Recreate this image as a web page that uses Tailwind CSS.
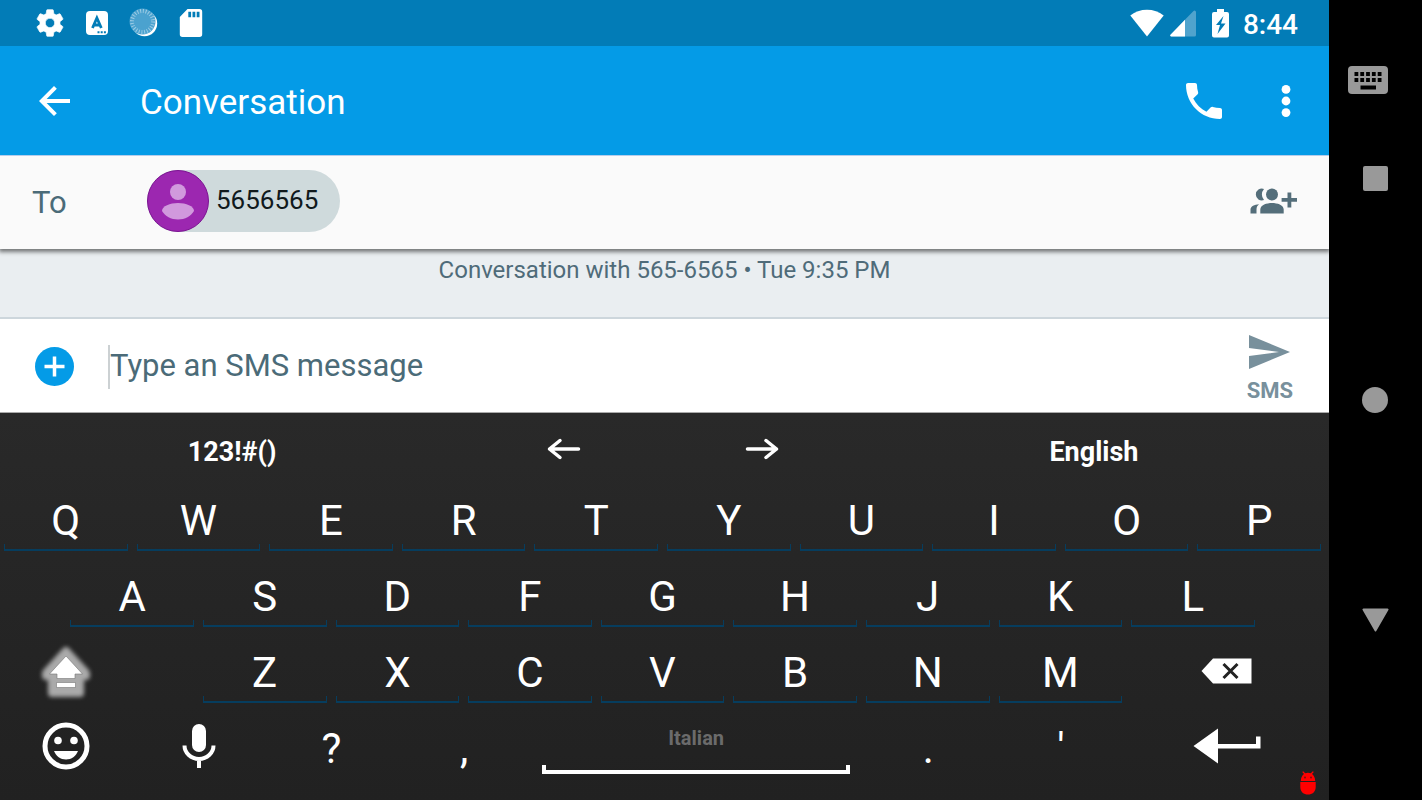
<!DOCTYPE html>
<html lang="en">
<head>
<meta charset="utf-8">
<meta name="viewport" content="width=device-width, initial-scale=1">
<title>Conversation</title>
<script src="https://cdn.jsdelivr.net/npm/@tailwindcss/browser@4"></script>
</head>
<body class="flex min-h-screen bg-black font-['Roboto',sans-serif]">
<div class="relative flex min-w-0 flex-1 flex-col">
  <!-- Status bar -->
  <div class="flex h-[46px] items-center bg-[#027cb7] pr-[31px] pl-[34px] text-white">
    <svg class="size-8" viewBox="0 0 24 24" fill="currentColor" stroke="currentColor" stroke-width=".5" role="img" aria-label="Settings"><path d="M19.43 12.98c.04-.32.07-.64.07-.98s-.03-.66-.07-.98l2.11-1.65c.19-.15.24-.42.12-.64l-2-3.46c-.12-.22-.39-.3-.61-.22l-2.49 1c-.52-.4-1.08-.73-1.69-.98l-.38-2.65C14.46 2.18 14.25 2 14 2h-4c-.25 0-.46.18-.49.42l-.38 2.65c-.61.25-1.17.59-1.69.98l-2.49-1c-.23-.09-.49 0-.61.22l-2 3.46c-.13.22-.07.49.12.64l2.11 1.65c-.04.32-.07.65-.07.98s.03.66.07.98l-2.11 1.65c-.19.15-.24.42-.12.64l2 3.46c.12.22.39.3.61.22l2.49-1c.52.4 1.08.73 1.69.98l.38 2.65c.03.24.24.42.49.42h4c.25 0 .46-.18.49-.42l.38-2.65c.61-.25 1.17-.59 1.69-.98l2.49 1c.23.09.49 0 .61-.22l2-3.46c.12-.22.07-.49-.12-.64l-2.11-1.65zM12 15.5c-1.93 0-3.5-1.57-3.5-3.5s1.57-3.5 3.5-3.5 3.5 1.57 3.5 3.5-1.57 3.5-3.5 3.5z"/></svg>
    <span class="ml-5 h-6 w-[22px] rounded-sm bg-white text-[#027cb7]">
      <svg viewBox="0 0 22 24" class="h-6 w-[22px]" fill="none" stroke="currentColor" role="img" aria-label="Keyboard language"><path d="M6.500 17 10.900 7l4.400 10M8 14h6" stroke-width="2.800"/><path d="M11.500 21.200h9" stroke-width="2" stroke-dasharray="2 1.200"/></svg>
    </span>
    <svg class="ml-5 size-8" viewBox="0 0 32 32" role="img" aria-label="Sync"><circle cx="16.500" cy="16.500" r="12.700" fill="#fff"/><circle cx="14.500" cy="14.500" r="13" fill="#4ba2cf"/><circle cx="14.500" cy="14.500" r="10.500" fill="none" stroke="#9bcbe4" stroke-width="4" stroke-dasharray="1 1.750"/></svg>
    <svg class="ml-[15px] size-8" viewBox="0 0 32 32" fill="currentColor" role="img" aria-label="SD card"><path fill-rule="evenodd" d="M12.500 2H24.500a2.700 2.700 0 0 1 2.700 2.700v22.600a2.700 2.700 0 0 1-2.700 2.700h-17a2.700 2.700 0 0 1-2.700-2.700V10zM13.300 4.800v5.400h2.800V4.800zm4.200 0v5.400h2.800V4.800zm4.200 0v5.400h2.800V4.800z"/></svg>
    <span class="flex-1"></span>
    <svg class="h-7 w-[34px]" viewBox="0 0 34 28" fill="currentColor" role="img" aria-label="Wi-Fi"><path d="M17 27.500.3 6.400C5 2.700 10.800.8 17 .8s12 1.900 16.700 5.600z"/></svg>
    <svg class="ml-[5px] size-7" viewBox="0 0 28 28" role="img" aria-label="Signal"><path d="M27 3a1.500 1.500 0 0 0-2.500-1L1 26l1 1.500h23.500a1.500 1.500 0 0 0 1.500-1.500z" fill="#4fa3cd"/><path d="M16 10.800v16.700H2.200A1 1 0 0 1 1.300 26z" fill="#fff"/></svg>
    <svg class="ml-3 h-[30px] w-[22px]" viewBox="0 0 22 30" fill="currentColor" role="img" aria-label="Charging"><path fill-rule="evenodd" d="M8 1h7v3h3a2 2 0 0 1 2 2v21.500a2 2 0 0 1-2 2H5a2 2 0 0 1-2-2V6a2 2 0 0 1 2-2h3zM14.500 8 7 17h4l-2.500 9 8-10.500H12z"/></svg>
    <span class="ml-3 pt-1 text-[28px] leading-8 font-medium">8:44</span>
  </div>
  <!-- App bar -->
  <header class="flex h-[109px] items-center bg-[#049be7] pr-[19px] pl-[31px] text-white">
    <button aria-label="Back" class="size-12"><svg class="size-12" viewBox="0 0 24 24" fill="currentColor"><path d="M19.500 11H7.830l5.090-5.090L11.500 4.500 4 12l7.500 7.500 1.410-1.410L7.830 13H19.500z"/></svg></button>
    <h1 class="ml-[61px] flex-1 pt-1 text-[35px] leading-10">Conversation</h1>
    <button aria-label="Call" class="size-12"><svg class="size-12" viewBox="0 0 24 24" fill="currentColor"><path d="M6.620 10.790c1.440 2.830 3.760 5.140 6.590 6.590l2.200-2.200c.27-.27.67-.36 1.020-.24 1.120.37 2.330.57 3.570.57.55 0 1 .45 1 1V20c0 .55-.45 1-1 1-9.390 0-17-7.610-17-17 0-.55.45-1 1-1h3.500c.55 0 1 .45 1 1 0 1.250.2 2.450.57 3.570.11.35.03.74-.25 1.020z"/></svg></button>
    <button aria-label="More options" class="ml-[34px] size-12"><svg class="size-12" viewBox="0 0 24 24" fill="currentColor"><circle cx="12" cy="6.200" r="2.200"/><circle cx="12" cy="12" r="2.200"/><circle cx="12" cy="17.800" r="2.200"/></svg></button>
  </header>
  <!-- Recipients -->
  <section class="z-10 flex h-[94px] items-center border-t border-[#b5cdec] bg-[#fafafa] pr-8 pl-8 shadow-[0_2px_4px_1px_rgba(0,0,0,0.5)] [clip-path:inset(0_0_-8px_0)]">
    <span class="w-[115px] text-[31px] leading-10 text-[#4b6b78]">To</span>
    <button class="mb-1 flex h-[62px] items-center rounded-full bg-[#cfdadc] pr-[22px] text-[26px] text-[#10191c]">
      <svg class="mr-[7px] size-[62px]" viewBox="0 0 62 62"><circle cx="31" cy="31" r="30.500" fill="#9c27b0" stroke="#7c1392"/><circle cx="31" cy="22" r="8" fill="#d199dd"/><path d="M15 41c0-5 8-8 16-8s16 3 16 8c-3 5-9 8.500-16 8.500S18 46 15 41z" fill="#d199dd"/></svg>5656565</button>
    <span class="flex-1"></span>
    <button aria-label="Add people" class="mb-1"><svg class="h-[26px] w-[47px]" viewBox="0 0 47 26" fill="#546e7a"><circle cx="22" cy="6.500" r="6"/><path d="M10.300 25.500v-4c0-4.500 6.500-6.500 11.700-6.500s11.700 2 11.700 6.500v4zM14 .9a8.500 8.500 0 0 0 0 11.200A6 6 0 1 1 14 .9zM9 16.300c-1.800 1.500-2.500 3-2.500 5.200v4H.5v-4c0-3 4-4.900 8.500-5.200zM37.500 4.500h3.800V10h5.700v3.800h-5.700v5.700h-3.800v-5.700h-5.900V10h5.900z"/></svg></button>
  </section>
  <!-- Thread -->
  <main class="h-[70px] border-b-2 border-[#cdd6dc] bg-[#eaeef1] pt-[5px] text-center text-[24px] leading-8 text-[#4f6b79]">Conversation with 565-6565 • Tue 9:35 PM</main>
  <!-- Composer -->
  <form class="flex h-[94px] items-center border-b border-[#aaa] bg-white pt-0.5 pr-9 pl-[35px]">
    <button type="button" aria-label="Attach"><svg class="size-[39px]" viewBox="0 0 39 39"><circle cx="19.500" cy="19.500" r="19.500" fill="#049be7"/><path d="M19.500 9.500v20M9.500 19.500h20" stroke="#fff" stroke-width="3.500"/></svg></button>
    <input type="text" aria-label="Message" placeholder="Type an SMS message" class="ml-[34px] h-11 min-w-0 flex-1 border-l-2 border-[#ccd1d3] text-[31px] text-[#4b6b78] outline-none placeholder:text-[#4b6b78]">
    <button type="button" class="flex flex-col items-center gap-2.5 pt-1 text-[22px] leading-6 font-bold text-[#78909c]"><svg class="h-[34px] w-[41px]" viewBox="0 0 41 34" fill="currentColor"><path d="M0 0 41 17 0 34V21l30-4L0 13z"/></svg>SMS</button>
  </form>
  <!-- Keyboard -->
  <section aria-label="Keyboard" class="grid flex-1 auto-rows-[76px] grid-cols-20 grid-rows-[66px] content-start bg-linear-to-b from-[#292929] to-[#212121] pr-[3px] text-[42px] leading-[54px] text-white [&>button]:min-w-0">
    <div class="col-span-20 grid h-[66px] grid-cols-20 text-[27px] font-bold">
      <button class="col-span-7 pt-[11px]">123!#()</button>
      <button aria-label="Cursor left" class="col-span-3 flex items-center justify-center pt-1.5"><svg class="h-6 w-[34px]" viewBox="0 0 34 24" fill="none" stroke="currentColor" stroke-width="3.500" stroke-linecap="round" stroke-linejoin="round"><path d="M31.500 12H2.500M13 3.500 2.500 12 13 20.500"/></svg></button>
      <button aria-label="Cursor right" class="col-span-3 flex items-center justify-center pt-1.5"><svg class="h-6 w-[34px]" viewBox="0 0 34 24" fill="none" stroke="currentColor" stroke-width="3.500" stroke-linecap="round" stroke-linejoin="round"><path d="M2.500 12h29M21 3.500 31.500 12 21 20.500"/></svg></button>
      <button class="col-span-7 pt-[11px]">English</button>
    </div>
  </section>
  <svg class="absolute right-[13px] bottom-[5px] h-6 w-4" viewBox="0 0 16 24" fill="#f00" aria-hidden="true"><path d="M.8 10C.8 6 3 3.800 4 3L2.200.9l1-.7L5.200 2.200a8 8 0 0 1 5.600 0L12.800.2l1 .7L12 3c1 .8 3.200 3 3.200 7zM.3 11h15.400v5c0 5-3.500 7.500-7.700 7.500S.3 21 .3 16z"/><circle cx="5" cy="6.500" r=".9" fill="#611"/><circle cx="11" cy="6.500" r=".9" fill="#611"/></svg>
</div>
<!-- Device buttons -->
<nav class="flex w-[93px] flex-col items-center text-[#999]">
  <button aria-label="Toggle keyboard" class="mt-[66px] mr-4"><svg class="block h-7 w-10" viewBox="0 0 40 28"><rect width="40" height="28" rx="4" fill="currentColor"/><path d="M6.500 8h28M6.500 14h28" stroke="#000" stroke-width="3.800" stroke-dasharray="3.800 2"/><path d="M12.500 21.500h15.500" stroke="#000" stroke-width="4"/></svg></button>
  <button aria-label="Overview" class="mt-[72px] size-[25px] rounded-xs bg-current"></button>
  <button aria-label="Home" class="mt-[196px] mr-px size-[26px] rounded-full bg-current"></button>
  <button aria-label="Back" class="mt-[195px]"><svg class="block h-6 w-[27px]" viewBox="0 0 27 24" fill="currentColor"><path d="M1.500.5h24a1 1 0 0 1 .9 1.500L14.300 23a1 1 0 0 1-1.600 0L.6 2A1 1 0 0 1 1.500.5z"/></svg></button>
</nav>
<template id="key"><button class="col-span-2 flex flex-col pt-[15px] pr-[5px] pl-1"><span class="w-full text-center"></span><i class="-mt-1 h-[7px] w-full border-x border-b-2 border-[#063d5e]"></i></button></template>
<template id="shift"><button aria-label="Shift" class="col-span-2 flex items-center justify-center pt-1"><svg class="size-16" viewBox="0 0 64 64"><path d="M32 12 12 34v3h6v17h28V37h6v-3z" fill="#aaa" stroke="#aaa" stroke-width="8" stroke-linejoin="round" class="blur-[2px]"/><path d="M32 17 15.500 35H23v4.500h18V35h7.500zM22.500 43.500h19v5h-19z" fill="#fff" stroke="#777" stroke-width=".6"/></svg></button></template>
<template id="delete"><button aria-label="Delete" class="col-span-3 flex items-center justify-center pt-1"><svg class="h-[26px] w-[51px]" viewBox="0 0 51 26"><path d="M.5 13 12 .5h38.500v25H12z" fill="#fff"/><path d="m22.500 6 14 14m0-14-14 14" stroke="#222" stroke-width="3"/></svg></button></template>
<template id="bottom">
  <button aria-label="Emoji" class="col-span-2 flex items-center justify-center pt-0.5"><svg class="size-12" viewBox="0 0 48 48"><circle cx="24" cy="24" r="21" fill="none" stroke="#fff" stroke-width="5"/><circle cx="16" cy="18.500" r="3.800" fill="#fff"/><circle cx="32" cy="18.500" r="3.800" fill="#fff"/><path d="M12 29h24c-2 5-6.500 8.500-12 8.500S14 34 12 29z" fill="#fff"/></svg></button>
  <button aria-label="Voice input" class="col-span-2 flex items-center justify-center pt-0.5"><svg class="h-[46px] w-[34px]" viewBox="0 0 34 46"><rect x="10" y="1" width="14" height="28" rx="7" fill="#fff"/><path d="M2.500 22.500a14.500 13.500 0 0 0 29 0M17 36v9" fill="none" stroke="#fff" stroke-width="4"/></svg></button>
  <button class="col-span-2 pt-2">?</button>
  <button class="col-span-2 pt-2">,</button>
  <button class="col-span-5 flex flex-col items-center px-3 pt-[19px] text-[20px] leading-6 font-bold text-[#6b6b6b]">Italian<i class="mt-[15px] h-[9px] w-full border-4 border-t-0 border-white"></i></button>
  <button class="col-span-2 pt-2">.</button>
  <button class="col-span-2 pt-2">'</button>
  <button aria-label="Enter" class="col-span-3 flex items-center justify-center pt-0.5"><svg class="h-9 w-[68px]" viewBox="0 0 68 36"><path d="M.5 18 25 .5V16h38V8.500h4.500v12H25v15z" fill="#fff"/></svg></button>
</template>
<script>
  const board = document.querySelector('section[aria-label="Keyboard"]');
  const add = id => board.append(document.getElementById(id).content.cloneNode(true));
  const gap = () => board.append(document.createElement('span'));
  const letters = text => {
    for (const c of text) {
      const key = document.getElementById('key').content.cloneNode(true);
      key.querySelector('span').textContent = c;
      board.append(key);
    }
  };
  letters('QWERTYUIOP');
  gap(); letters('ASDFGHJKL'); gap();
  add('shift'); gap(); letters('ZXCVBNM'); add('delete');
  add('bottom');
</script>
</body>
</html>
